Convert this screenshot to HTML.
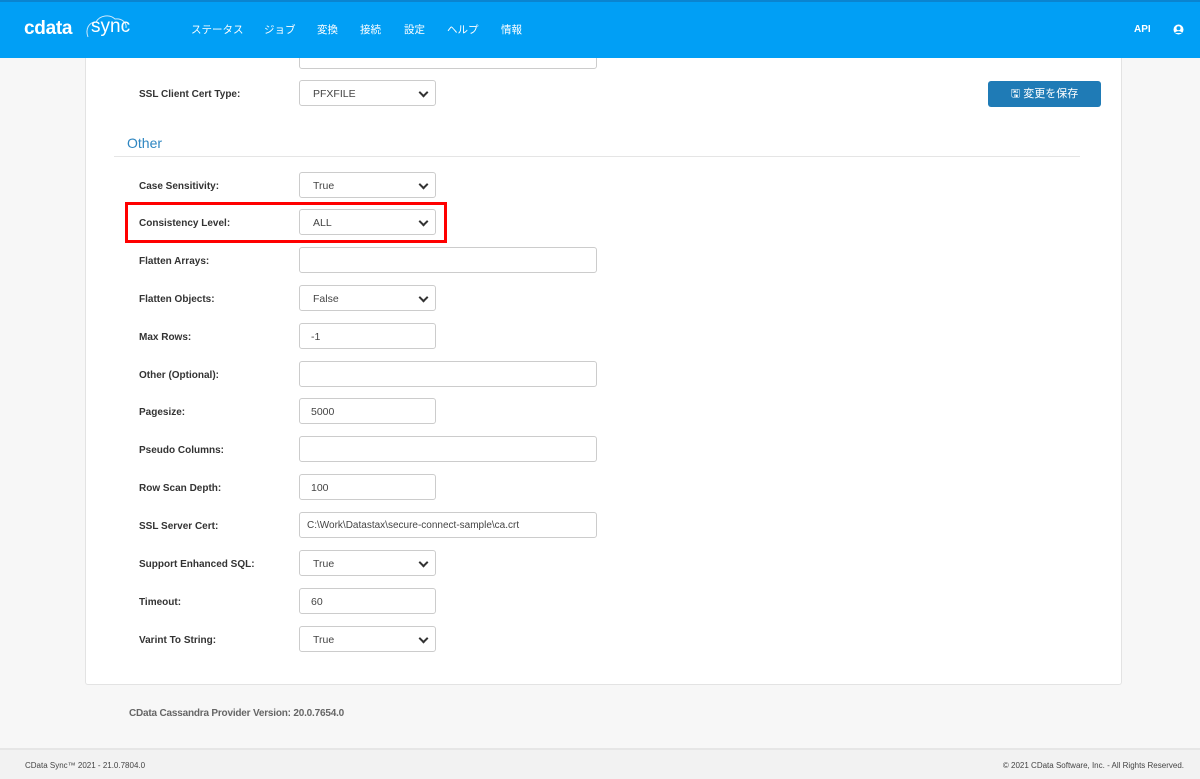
<!DOCTYPE html>
<html><head><meta charset="utf-8"><style>
*{box-sizing:border-box;margin:0;padding:0}
body{width:1200px;height:779px;overflow:hidden;background:#f7f7f7;font-family:"Liberation Sans","Noto Sans CJK JP",sans-serif;position:relative;color:#333}
.hdr{position:absolute;left:0;top:0;width:1200px;height:58px;background:#019ff5;border-top:2px solid #0a84d0;color:#fff}
.nav{position:absolute;top:20px;font-size:10.5px;color:#fff}
.card{position:absolute;left:85px;top:40px;width:1037px;height:645px;background:#fff;border:1px solid #e3e3e3;border-radius:3px}
.lbl{position:absolute;left:139px;font-size:10px;font-weight:bold;color:#333;margin-top:1px}
.in{position:absolute;left:299px;height:26px;border:1px solid #ccc;border-radius:3px;background:#fff;font-size:10.5px;color:#444;line-height:26px;padding-left:7px}
.sel{width:137px;padding-left:13px}
.sel:after{content:"";position:absolute;right:8px;top:8px;width:5px;height:5px;border-right:2px solid #333;border-bottom:2px solid #333;transform:rotate(45deg)}
.sm{width:137px;padding-left:11px}
.txt{width:298px}
</style></head><body>
<div class="card"></div>
<div class="in txt" style="top:43px"></div>
<div class="hdr">
<div style="position:absolute;left:24px;top:16px;font-size:19px;font-weight:bold;letter-spacing:-0.3px">cdata</div>
<svg style="position:absolute;left:82px;top:10px" width="50" height="28" viewBox="0 0 50 28"><path d="M6 25 C3 17 7 10 14 10 C18 3 28 2 33 7 C40 6 45 11 44 16" fill="none" stroke="#cfe9fb" stroke-width="1"/></svg>
<div style="position:absolute;left:91px;top:14px;font-size:19px;">sync</div>
<div class="nav" style="left:191px">ステータス</div>
<div class="nav" style="left:264px">ジョブ</div>
<div class="nav" style="left:317px">変換</div>
<div class="nav" style="left:360px">接続</div>
<div class="nav" style="left:404px">設定</div>
<div class="nav" style="left:447px">ヘルプ</div>
<div class="nav" style="left:501px">情報</div>
<div class="nav" style="left:1134px;font-weight:bold;font-size:10px;top:22px">API</div>
<svg style="position:absolute;left:1173px;top:22px" width="11" height="11" viewBox="0 0 11 11"><circle cx="5.5" cy="5.5" r="5" fill="#fff"/><circle cx="5.5" cy="4.2" r="2" fill="#019ff5"/><path d="M2 9 C3 6.5 8 6.5 9 9" fill="#019ff5"/></svg>
</div>
<div class="lbl" style="top:88px">SSL Client Cert Type:</div>
<div class="in sel" style="top:80px">PFXFILE</div>
<div style="position:absolute;left:988px;top:81px;width:113px;height:26px;background:#1f7bb6;border-radius:3px;color:#fff;font-size:11px;line-height:26px;text-align:center">🖫 変更を保存</div>
<div style="position:absolute;left:127px;top:135px;font-size:14px;color:#2e86c1">Other</div>
<div style="position:absolute;left:114px;top:156px;width:966px;height:1px;background:#e5e5e5"></div>
<div style="position:absolute;left:125px;top:202px;width:322px;height:41px;border:3px solid #f00"></div>

<div class="lbl" style="top:180px">Case Sensitivity:</div><div class="in sel" style="top:172px">True</div>
<div class="lbl" style="top:217px">Consistency Level:</div><div class="in sel" style="top:209px">ALL</div>
<div class="lbl" style="top:255px">Flatten Arrays:</div><div class="in txt" style="top:247px"></div>
<div class="lbl" style="top:293px">Flatten Objects:</div><div class="in sel" style="top:285px">False</div>
<div class="lbl" style="top:331px">Max Rows:</div><div class="in sm" style="top:323px">-1</div>
<div class="lbl" style="top:369px">Other (Optional):</div><div class="in txt" style="top:361px"></div>
<div class="lbl" style="top:406px">Pagesize:</div><div class="in sm" style="top:398px">5000</div>
<div class="lbl" style="top:444px">Pseudo Columns:</div><div class="in txt" style="top:436px"></div>
<div class="lbl" style="top:482px">Row Scan Depth:</div><div class="in sm" style="top:474px">100</div>
<div class="lbl" style="top:520px">SSL Server Cert:</div><div class="in txt" style="top:512px;font-size:10px">C:\Work\Datastax\secure-connect-sample\ca.crt</div>
<div class="lbl" style="top:558px">Support Enhanced SQL:</div><div class="in sel" style="top:550px">True</div>
<div class="lbl" style="top:596px">Timeout:</div><div class="in sm" style="top:588px">60</div>
<div class="lbl" style="top:634px">Varint To String:</div><div class="in sel" style="top:626px">True</div>

<div style="position:absolute;left:129px;top:708px;font-size:10px;font-weight:bold;color:#666;letter-spacing:-0.2px">CData Cassandra Provider Version: 20.0.7654.0</div>
<div style="position:absolute;left:0;top:748px;width:1200px;height:31px;background:#f2f2f2;border-top:2px solid #e6e6e6;font-size:8px;color:#444">
<div style="position:absolute;left:25px;top:11px">CData Sync™ 2021 - 21.0.7804.0</div>
<div style="position:absolute;right:16px;top:11px">© 2021 CData Software, Inc. - All Rights Reserved.</div>
</div>
</body></html>
